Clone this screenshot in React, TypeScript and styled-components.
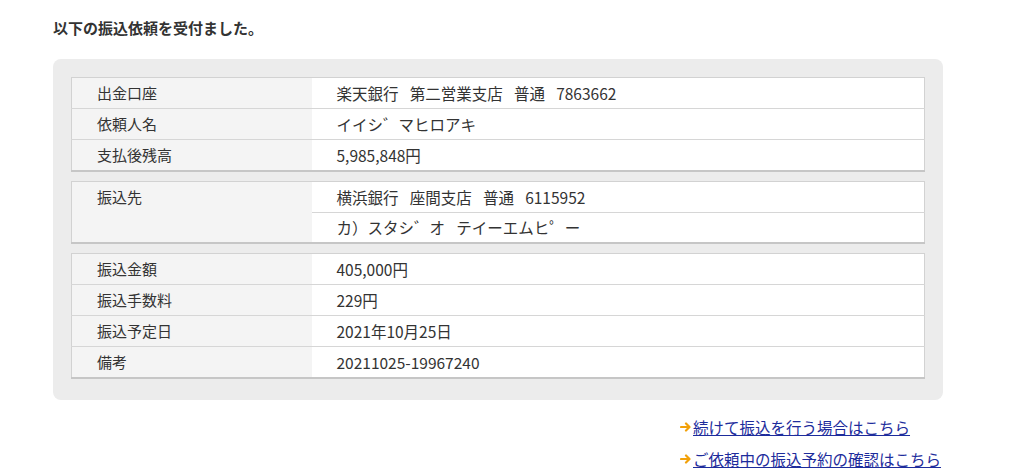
import styled, { createGlobalStyle } from 'styled-components'

const GlobalStyle = createGlobalStyle`
    body {
        margin: 0;
        background: #ffffff;
        font-family: "Noto Sans CJK JP", "Liberation Sans", sans-serif;
        color: #333333;
    }
`

const Page = styled.div`
    width: 890px;
    padding: 18px 0 0 53px;
`

const Title = styled.h1`
    margin: 0;
    font-size: 15px;
    font-weight: bold;
    line-height: 20px;
    color: #333333;
`

const Panel = styled.div`
    margin-top: 21px;
    background: #ececec;
    border-radius: 8px;
    padding: 18px 18px 21px;
    display: flex;
    flex-direction: column;
    gap: 9px;
`

const Table = styled.table`
    width: 100%;
    border-collapse: collapse;
    border: 1px solid #d2d2d2;
    border-bottom: 2px solid #c6c6c6;
    table-layout: fixed;
`

const Label = styled.td<{ $top?: boolean }>`
    width: 240px;
    height: 31px;
    padding: ${(p) => (p.$top ? '5px' : '0')} 0 0 25px;
    box-sizing: border-box;
    background: #f4f4f4;
    border-bottom: 1px solid #d6d6d6;
    font-size: 15px;
    line-height: 20px;
    vertical-align: ${(p) => (p.$top ? 'top' : 'middle')};
`

const Value = styled.td`
    height: 31px;
    padding: 0 0 0 25px;
    box-sizing: border-box;
    background: #ffffff;
    border-bottom: 1px solid #d6d6d6;
    font-size: 15.5px;
    line-height: 20px;
    white-space: pre;
`

const Links = styled.div`
    display: flex;
    flex-direction: column;
    align-items: flex-start;
    gap: 12px;
    margin: 17px 0 0 627px;
`

const LinkRow = styled.a`
    display: flex;
    align-items: center;
    font-size: 15.5px;
    line-height: 20px;
    color: #1d2c9c;
    text-decoration: underline;
    white-space: nowrap;
`

const Arrow = () => (
    <svg width="12" height="10" viewBox="0 0 12 10" style={{ marginRight: 1 }}>
        <path d="M1 5H9M6 1.5L9.5 5L6 8.5" stroke="#f2a10a" strokeWidth="2.2" fill="none" strokeLinecap="round" strokeLinejoin="round" />
    </svg>
)

type Row = { label: string; value: string }

const gap = '\u2002 '

const top: Row[] = [
    { label: '出金口座', value: ['楽天銀行', '第二営業支店', '普通', '7863662'].join(gap) },
    { label: '依頼人名', value: 'イイシ゛マヒロアキ' },
    { label: '支払後残高', value: '5,985,848円' },
]

const bottom: Row[] = [
    { label: '振込金額', value: '405,000円' },
    { label: '振込手数料', value: '229円' },
    { label: '振込予定日', value: '2021年10月25日' },
    { label: '備考', value: '20211025-19967240' },
]

const Rows = ({ rows }: { rows: Row[] }) => (
    <Table>
        <tbody>
            {rows.map((r) => (
                <tr key={r.label}>
                    <Label>{r.label}</Label>
                    <Value>{r.value}</Value>
                </tr>
            ))}
        </tbody>
    </Table>
)

const App = () => {
    return (
        <>
            <GlobalStyle />
            <Page>
                <Title>以下の振込依頼を受付ました。</Title>
                <Panel>
                    <Rows rows={top} />
                    <Table>
                        <tbody>
                            <tr>
                                <Label $top rowSpan={2}>振込先</Label>
                                <Value>{['横浜銀行', '座間支店', '普通', '6115952'].join(gap)}</Value>
                            </tr>
                            <tr>
                                <Value>{'カ）スタシ゛オ' + gap + 'テイーエムヒ゜ー'}</Value>
                            </tr>
                        </tbody>
                    </Table>
                    <Rows rows={bottom} />
                </Panel>
                <Links>
                    <LinkRow href="#">
                        <Arrow />
                        続けて振込を行う場合はこちら
                    </LinkRow>
                    <LinkRow href="#">
                        <Arrow />
                        ご依頼中の振込予約の確認はこちら
                    </LinkRow>
                </Links>
            </Page>
        </>
    )
}

export default App
